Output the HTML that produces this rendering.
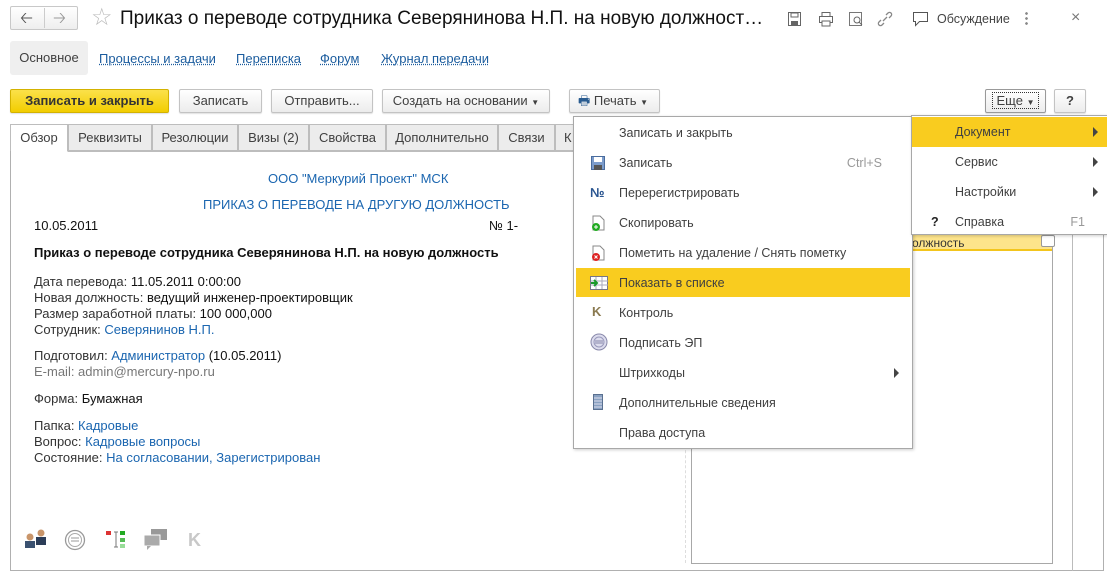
<!DOCTYPE html>
<html><head><meta charset="utf-8"><style>
*{box-sizing:border-box}
body{margin:0;width:1107px;height:572px;overflow:hidden;background:#fff;font-family:"Liberation Sans",Arial,sans-serif;font-size:12px;color:#333;position:relative}
.a{position:absolute}
.btn{position:absolute;height:24px;border:1px solid #c3c3c3;border-radius:2px;background:linear-gradient(#fff,#ececec);line-height:22px;text-align:center;color:#404040;font-size:13px;box-shadow:0 1px 1px rgba(0,0,0,.12)}
.tab{position:absolute;top:124px;height:27px;border:1px solid #bdbdbd;background:#ececec;line-height:25px;text-align:center;color:#404040;font-size:13px}
.lnk{color:#1b5c9e;text-decoration:underline dotted;}
.menu{position:absolute;background:#fff;border:1px solid #a8a8a8;box-shadow:1px 1px 3px rgba(0,0,0,.2)}
.mi{position:absolute;left:0;right:0;height:30px;line-height:30px;font-size:12.5px;color:#404040}
.hl{background:#f9cc1f}
.blue{color:#1b66b0}
.doc{font-size:13px}
.tri{position:absolute;width:0;height:0;border-top:5px solid transparent;border-bottom:5px solid transparent;border-left:5px solid #444}
</style></head><body>
<!-- header -->
<div class="a" style="left:10px;top:6px;width:68px;height:24px;border:1px solid #c8c8c8;border-radius:2px;background:linear-gradient(#fff,#eee)"></div>
<div class="a" style="left:44px;top:8px;width:1px;height:20px;background:#ccc"></div>
<div class="a" style="left:20px;top:7px;font-size:16px;color:#555">&#129120;</div>
<div class="a" style="left:53px;top:7px;font-size:16px;color:#999">&#129122;</div>
<div class="a" style="left:91px;top:3px;font-size:24px;color:#bbb">☆</div>
<div class="a" style="left:120px;top:8px;font-size:19px;color:#111">Приказ о переводе сотрудника Северянинова Н.П. на новую должност…</div>
<svg class="a" style="left:787px;top:11px" width="16" height="16"><rect x="1.5" y="1.5" width="12" height="13" fill="none" stroke="#666"/><rect x="4" y="2" width="7" height="4" fill="none" stroke="#666"/><rect x="4" y="10" width="7" height="4" fill="#666"/></svg>
<svg class="a" style="left:818px;top:11px" width="16" height="16"><rect x="4" y="1.5" width="8" height="4" fill="none" stroke="#666"/><rect x="1.5" y="5.5" width="13" height="6" fill="none" stroke="#666"/><rect x="4" y="10" width="8" height="5" fill="#fff" stroke="#666"/></svg>
<svg class="a" style="left:848px;top:11px" width="16" height="16"><rect x="1.5" y="1.5" width="12" height="13" fill="none" stroke="#777"/><circle cx="9" cy="9" r="3" fill="none" stroke="#666"/><path d="M11 11l3 3" stroke="#666"/></svg>
<svg class="a" style="left:877px;top:11px" width="16" height="16"><path d="M6 10l4-4M4 9l-2 2a2 2 0 0 0 3 3l2-2M12 7l2-2a2 2 0 0 0-3-3l-2 2" fill="none" stroke="#888" stroke-width="1.3"/></svg>
<svg class="a" style="left:912px;top:10px" width="18" height="18"><path d="M1.5 2.5h14v9h-8l-4 4v-4h-2z" fill="none" stroke="#555"/></svg>
<div class="a" style="left:937px;top:12px;font-size:12.5px;color:#444">Обсуждение</div>
<div class="a" style="left:1025px;top:11px;width:3px;height:14px;background:radial-gradient(circle,#888 1.2px,transparent 1.5px) 0 0/3px 5px"></div>
<div class="a" style="left:1071px;top:9px;font-size:16px;color:#777">×</div>
<!-- nav -->
<div class="a" style="left:10px;top:41px;width:78px;height:34px;background:#efefef;border-radius:3px;line-height:34px;text-align:center;color:#404040;font-size:13px">Основное</div>
<div class="a" style="left:99px;top:51px;font-size:13px"><span class="lnk">Процессы и задачи</span></div>
<div class="a" style="left:236px;top:51px;font-size:13px"><span class="lnk">Переписка</span></div>
<div class="a" style="left:320px;top:51px;font-size:13px"><span class="lnk">Форум</span></div>
<div class="a" style="left:381px;top:51px;font-size:13px"><span class="lnk">Журнал передачи</span></div>
<!-- toolbar -->
<div class="btn" style="left:10px;top:89px;width:159px;background:linear-gradient(#fbe14a,#f2cd00);border-color:#d3b200;font-weight:bold;color:#333">Записать и закрыть</div>
<div class="btn" style="left:179px;top:89px;width:83px">Записать</div>
<div class="btn" style="left:271px;top:89px;width:102px">Отправить...</div>
<div class="btn" style="left:382px;top:89px;width:168px">Создать на основании <span style="font-size:8px">▼</span></div>
<div class="btn" style="left:569px;top:89px;width:91px;text-align:left;padding-left:8px"><span style="color:#2a5c90">&#128438;</span> Печать <span style="font-size:8px">▼</span></div>
<div class="btn" style="left:985px;top:89px;width:61px;border-color:#999"><span style="border:1px dotted #333;padding:0 4px">Еще <span style="font-size:8px">▼</span></span></div>
<div class="btn" style="left:1054px;top:89px;width:32px;font-weight:bold">?</div>
<!-- tabs -->
<div class="tab" style="left:10px;width:58px;background:#fff;border-bottom-color:#fff;height:28px">Обзор</div>
<div class="tab" style="left:68px;width:84px">Реквизиты</div>
<div class="tab" style="left:152px;width:86px">Резолюции</div>
<div class="tab" style="left:238px;width:71px">Визы (2)</div>
<div class="tab" style="left:309px;width:77px">Свойства</div>
<div class="tab" style="left:386px;width:112px">Дополнительно</div>
<div class="tab" style="left:498px;width:57px">Связи</div>
<div class="tab" style="left:555px;width:40px;text-align:left;padding-left:8px">К</div>
<!-- panel -->
<div class="a" style="left:10px;top:151px;width:1094px;height:420px;border:1px solid #b0b0b0;border-top:none"></div>
<div class="a" style="left:68px;top:151px;width:1036px;height:1px;background:#bdbdbd"></div>
<div class="a" style="left:685px;top:151px;height:412px;border-left:1px dashed #ddd"></div>
<div class="a" style="left:691px;top:151px;width:362px;height:413px;border:1px solid #a8a8a8;border-top:none"></div>
<div class="a" style="left:1072px;top:151px;width:1px;height:420px;background:#bbb"></div>
<div class="a" style="left:695px;top:233px;width:357px;height:18px;background:#fde48b;border-bottom:2px solid #f3c51d"></div>
<div class="a" style="left:905px;top:236px;font-size:12px;color:#333">должность</div>
<div class="a" style="left:1041px;top:235px;width:14px;height:12px;border:1px solid #999;background:#fff;border-radius:2px"></div>
<!-- document -->
<div class="a blue doc" style="left:268px;top:171px">ООО "Меркурий Проект" МСК</div>
<div class="a blue doc" style="left:203px;top:197px">ПРИКАЗ О ПЕРЕВОДЕ НА ДРУГУЮ ДОЛЖНОСТЬ</div>
<div class="a doc" style="left:34px;top:218px;color:#111">10.05.2011</div>
<div class="a doc" style="left:489px;top:218px;color:#111">№ 1-</div>
<div class="a doc" style="left:34px;top:245px;font-weight:bold;color:#111">Приказ о переводе сотрудника Северянинова Н.П. на новую должность</div>
<div class="a doc" style="left:34px;top:274px;line-height:16px">Дата перевода: <span style="color:#111">11.05.2011 0:00:00</span><br>Новая должность: <span style="color:#111">ведущий инженер-проектировщик</span><br>Размер заработной платы: <span style="color:#111">100 000,000</span><br>Сотрудник: <span class="blue">Северянинов Н.П.</span></div>
<div class="a doc" style="left:34px;top:348px;line-height:16px">Подготовил: <span class="blue">Администратор</span> <span style="color:#111">(10.05.2011)</span><br><span style="color:#777">E-mail: admin@mercury-npo.ru</span></div>
<div class="a doc" style="left:34px;top:391px">Форма: <span style="color:#111">Бумажная</span></div>
<div class="a doc" style="left:34px;top:418px;line-height:16px">Папка: <span class="blue">Кадровые</span><br>Вопрос: <span class="blue">Кадровые вопросы</span><br>Состояние: <span class="blue">На согласовании, Зарегистрирован</span></div>
<!-- bottom icons -->
<svg class="a" style="left:23px;top:528px" width="26" height="22"><circle cx="7" cy="9" r="3.5" fill="#c9956a"/><rect x="2" y="13" width="10" height="7" fill="#3a5170"/><circle cx="18" cy="5" r="3.5" fill="#c9956a"/><rect x="13" y="9" width="10" height="8" fill="#2c3d58"/></svg>
<svg class="a" style="left:64px;top:529px" width="22" height="22"><circle cx="11" cy="11" r="9.5" fill="none" stroke="#999" stroke-width="1.3"/><circle cx="11" cy="11" r="6.5" fill="none" stroke="#aaa"/><path d="M7 9h8M7 12h8" stroke="#999"/></svg>
<svg class="a" style="left:105px;top:529px" width="22" height="22"><rect x="1" y="2" width="5" height="4" fill="#d33"/><path d="M9 3h4M11 3v15M9 18h4" stroke="#777"/><rect x="15" y="2" width="5" height="4" fill="#2a2"/><rect x="15" y="9" width="5" height="4" fill="#5b5"/><rect x="15" y="15" width="5" height="4" fill="#9d9"/></svg>
<svg class="a" style="left:143px;top:528px" width="26" height="24"><rect x="8" y="1" width="16" height="11" fill="#999"/><rect x="1" y="7" width="16" height="11" fill="#aaa" stroke="#fff"/><path d="M4 18v4l4-4" fill="#aaa"/></svg>
<div class="a" style="left:188px;top:530px;font-size:18px;font-weight:bold;color:#c8c8c8">K</div>
<!-- menu 1 -->
<div class="menu" style="left:573px;top:116px;width:340px;height:333px">
<div class="mi" style="top:1px;padding-left:45px">Записать и закрыть</div>
<div class="mi" style="top:31px;padding-left:45px">Записать<span style="position:absolute;right:30px;color:#999">Ctrl+S</span></div>
<div class="mi" style="top:61px;padding-left:45px">Перерегистрировать</div>
<div class="mi" style="top:91px;padding-left:45px">Скопировать</div>
<div class="mi" style="top:121px;padding-left:45px">Пометить на удаление / Снять пометку</div>
<div class="mi hl" style="top:151px;padding-left:43px;left:2px;right:2px;height:29px">Показать в списке</div>
<div class="mi" style="top:181px;padding-left:45px">Контроль</div>
<div class="mi" style="top:211px;padding-left:45px">Подписать ЭП</div>
<div class="mi" style="top:241px;padding-left:45px">Штрихкоды<span class="tri" style="right:13px;top:10px"></span></div>
<div class="mi" style="top:271px;padding-left:45px">Дополнительные сведения</div>
<div class="mi" style="top:301px;padding-left:45px">Права доступа</div>
<svg class="a" style="left:17px;top:39px" width="14" height="14"><rect x="0.5" y="0.5" width="13" height="13" fill="#7c9ccb" stroke="#4a6c9d"/><rect x="3" y="1" width="8" height="5" fill="#fff"/><rect x="3" y="9" width="8" height="5" fill="#555"/></svg>
<div class="a" style="left:16px;top:68px;font-weight:bold;color:#2a5590;font-size:13px">№</div>
<svg class="a" style="left:17px;top:98px" width="14" height="16"><path d="M2 1h7l4 4v10H2z" fill="#fff" stroke="#888"/><circle cx="5" cy="12" r="4" fill="#2a2"/><path d="M3 12h4M5 10v4" stroke="#fff"/></svg>
<svg class="a" style="left:17px;top:128px" width="14" height="16"><path d="M2 1h7l4 4v10H2z" fill="#fff" stroke="#888"/><circle cx="5" cy="12" r="4" fill="#d22"/><path d="M3.5 10.5l3 3M6.5 10.5l-3 3" stroke="#fff"/></svg>
<svg class="a" style="left:16px;top:159px" width="18" height="14"><rect x="0.5" y="0.5" width="17" height="13" fill="#fff" stroke="#778"/><path d="M6 1v12M12 1v12M1 5h17M1 9h17" stroke="#aab"/><path d="M1 7h5M4 4l3 3-3 3" stroke="#1a9a2a" stroke-width="2" fill="none"/></svg>
<div class="a" style="left:18px;top:187px;font-weight:bold;color:#8a7a50;font-size:13px">K</div>
<svg class="a" style="left:16px;top:216px" width="18" height="18"><circle cx="9" cy="9" r="8" fill="#dde" stroke="#88a"/><circle cx="9" cy="9" r="5" fill="none" stroke="#99b"/><path d="M5 8h8M5 10h8" stroke="#88a"/></svg>
<svg class="a" style="left:19px;top:277px" width="10" height="16"><rect x="0.5" y="0.5" width="9" height="15" fill="#8aa2c2" stroke="#5a7090"/><path d="M1 4h8M1 7h8M1 10h8M1 13h8" stroke="#dde"/></svg>
</div>
<!-- menu 2 -->
<div class="menu" style="left:911px;top:115px;width:196px;height:120px;border-right:none">
<div class="mi hl" style="top:1px;padding-left:43px">Документ<span class="tri" style="right:9px;top:10px"></span></div>
<div class="mi" style="top:31px;padding-left:43px">Сервис<span class="tri" style="right:9px;top:10px"></span></div>
<div class="mi" style="top:61px;padding-left:43px">Настройки<span class="tri" style="right:9px;top:10px"></span></div>
<div class="mi" style="top:91px;padding-left:43px"><span style="position:absolute;left:19px;font-weight:bold;color:#222">?</span>Справка<span style="position:absolute;right:22px;color:#999">F1</span></div>
</div>
</body></html>
